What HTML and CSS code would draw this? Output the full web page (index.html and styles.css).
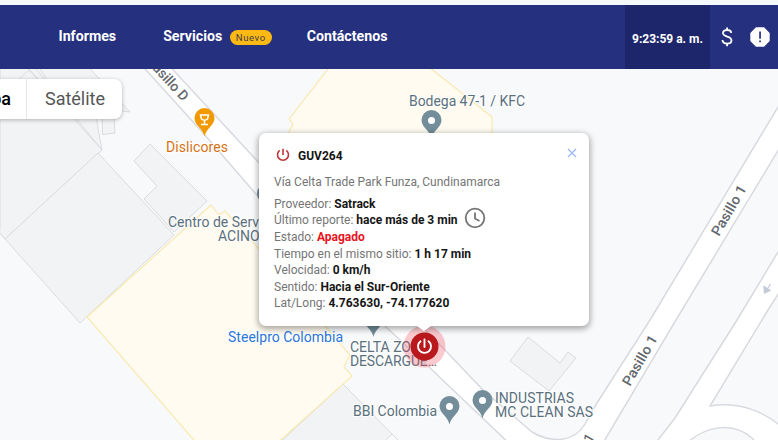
FILE: index.html
```html
<!DOCTYPE html>
<html lang="es">
<head>
<meta charset="utf-8">
<title>Satrack</title>
<link rel="stylesheet" href="styles.css">
</head>
<body>
<header class="navbar">
  <nav class="menu">
    <a class="menu-item">Informes</a>
    <a class="menu-item services">Servicios<span class="badge">Nuevo</span></a>
    <a class="menu-item">Contáctenos</a>
  </nav>
  <div class="clock">9:23:59 a. m.</div>
  <div class="actions">
    <svg class="dollar" viewBox="0 0 12 20"><path d="M10.2 6.1C10.2 4.1 8.600 3 6.100 3S2 4.200 2 6.100c0 4.500 8.500 2.400 8.500 7.200C10.500 15.500 8.700 16.700 6.100 16.700S1.500 15.400 1.500 13.100M6.100.6V3M6.100 16.700v2.500"/></svg>
    <svg class="alert" viewBox="0 0 20 20"><path class="oct" d="M6 .3h8L19.700 6v8L14 19.700H6L.3 14V6z"/><path class="mark" d="M9.200 4.500h1.700v7.200H9.200zM9.200 13.500h1.700v1.800H9.200z"/></svg>
  </div>
</header>
<main class="map">
  <svg class="canvas" viewBox="0 69 778 371">
    <g class="building">
      <path d="M0 60H86L102 150 5 239 0 233z"/>
      <path d="M29 69L102 150 5 239 0 233M19 79L29 70 39 81M36 69L102 150"/>
      <path d="M35 60H82L130 112 60 102z"/>
      <path d="M102 100H113L115 133 102.500 134.500z"/>
      <path d="M98 153L5 239 80 323 174 235z"/>
      <path d="M150 144L134 161 157 186 144 199 174 232 207 201z"/>
      <path d="M343 384L392 434 380 446H276z"/>
      <path d="M392 434L402 444"/>
      <path d="M528 337L510 361 549 391 576 358 568 352 560 363z"/>
    </g>
    <g class="zone">
      <path d="M335 60L289 119 293 124 280 150H492V117L420 60z"/>
      <path d="M211 205L87 317 200 447H273L352 376 344 367 350 355 325 326 259 249 225 211 219 215z"/>
    </g>
    <g class="road">
      <path d="M137 60L204 134 255 193 320 261 385 326 430 368 514 448H600L676 320 785 139V96L778 107 650 320 597 403 585 424Q577 438 560 439.500 545 440 532 432L483 390 443 348 350 255 260 164 164 60z"/>
      <path d="M784 242L737 320 675 418 658 440 650 450H680C704 423 734 422 752 438L762 450H790V435C765 408 735 402 710 406L768 310 784 285z"/>
    </g>
    <path class="arrow" d="M770.500 284L766 291M764 286.500L764.500 293 770 290.500z"/>
    <g class="street">
      <text transform="translate(146 62) rotate(47.500)" textLength="54" lengthAdjust="spacingAndGlyphs">Pasillo D</text>
      <text transform="translate(719 237) rotate(-60)" textLength="56" lengthAdjust="spacingAndGlyphs">Pasillo 1</text>
      <text transform="translate(630 387) rotate(-60)" textLength="56" lengthAdjust="spacingAndGlyphs">Pasillo 1</text>
      <text transform="translate(591 444) rotate(-60)">1</text>
    </g>
    <defs>
      <g id="pin">
        <path d="M0 0C-1.500-8-10-11-10-18.500A10 10 0 0 1 10-18.500C10-11 1.500-8 0 0z"/>
      </g>
    </defs>
    <g class="pin">
      <use href="#pin" x="431.500" y="138.500"/><circle cx="431.500" cy="120.500" r="3.500"/>
      <use href="#pin" x="449.500" y="424.500"/><circle cx="449.500" cy="406.500" r="3.500"/>
      <use href="#pin" x="482.500" y="418.500"/><circle cx="482.500" cy="400.500" r="3.500"/>
      <use href="#pin" x="373.500" y="337"/>
      <use href="#pin" x="267" y="212"/>
    </g>
    <use class="pin-bar" href="#pin" x="204.500" y="136.500"/>
    <path class="glass" d="M200.500 115H208.500L207.500 119Q204.500 121.500 201.500 119zM204.500 120V124.500M201 124.500H208"/>
    <g class="place">
      <text x="409" y="106" textLength="116">Bodega 47-1 / KFC</text>
      <text class="bar" x="166" y="152" textLength="62">Dislicores</text>
      <text x="168" y="227">Centro de Servicio</text>
      <text x="218" y="241">ACINOX</text>
      <text class="shop" x="228" y="342" textLength="115">Steelpro Colombia</text>
      <text x="350" y="352">CELTA ZONA</text>
      <text x="350" y="366" textLength="87">DESCARGUE…</text>
      <text x="353" y="416" textLength="84">BBI Colombia</text>
      <text x="495" y="403" textLength="79">INDUSTRIAS</text>
      <text x="495" y="417" textLength="98">MC CLEAN SAS</text>
    </g>
    <circle class="halo" cx="424.500" cy="346.500" r="21"/>
    <circle class="vehicle" cx="424.500" cy="346.500" r="14"/>
    <path class="vehicle-power" d="M420.500 341.300A6.500 6.500 0 1 0 428.500 341.300M424.500 339.500V347"/>
  </svg>
  <div class="map-type">
    <span class="type-map">Mapa</span>
    <span class="type-sat">Satélite</span>
  </div>
  <section class="popup">
    <div class="popup-head">
      <svg class="power" viewBox="0 0 14 14"><path d="M3.700 2.300A5.500 5.500 0 1 0 10.300 2.300M7 .8V7"/></svg>
      <strong>GUV264</strong>
      <svg class="close" viewBox="0 0 10 10"><path d="M1 1L9 9M9 1L1 9"/></svg>
    </div>
    <p class="address">Vía Celta Trade Park Funza, Cundinamarca</p>
    <ul class="details">
      <li>Proveedor: <b>Satrack</b></li>
      <li class="report">Último reporte: <b>hace más de 3 min</b><svg class="history" viewBox="0 0 22 22"><circle cx="11" cy="11" r="9.300"/><path d="M11 5.500V11.500L15.500 14"/></svg></li>
      <li>Estado: <b class="off">Apagado</b></li>
      <li>Tiempo en el mismo sitio: <b>1 h 17 min</b></li>
      <li>Velocidad: <b>0 km/h</b></li>
      <li>Sentido: <b>Hacia el Sur-Oriente</b></li>
      <li>Lat/Long: <b>4.763630, -74.177620</b></li>
    </ul>
  </section>
</main>
</body>
</html>
```
FILE: styles.css
```css
* { box-sizing: border-box; }
body {
  margin: 0;
  height: 440px;
  overflow: hidden;
  display: flex;
  flex-direction: column;
  font-family: Roboto, "Liberation Sans", sans-serif;
  background: #fff;
}
.navbar {
  flex: none;
  height: 69px;
  border-top: 5px solid #f5f8ff;
  background: #25307f;
  display: flex;
  color: #fff;
}
.menu {
  flex: 1;
  display: flex;
  align-items: center;
  padding: 0 0 2px 58.500px;
  font-size: 14.200px;
  font-weight: 700;
}
.menu-item { white-space: nowrap; }
.services {
  display: flex;
  align-items: center;
  margin: 0 35px 0 47px;
}
.badge {
  width: 42px;
  height: 15px;
  margin: 2px 0 0 7.500px;
  border-radius: 8px;
  background: #fdb913;
  color: #423d45;
  font-size: 9.500px;
  font-weight: 400;
  line-height: 15px;
  letter-spacing: .6px;
  text-align: center;
}
.clock {
  width: 85px;
  background: #1d266b;
  font-size: 12px;
  font-weight: 700;
  line-height: 68px;
  text-align: center;
  white-space: nowrap;
}
.actions {
  width: 68px;
  display: flex;
  align-items: center;
  padding-left: 11px;
}
.dollar { width: 12px; height: 20px; fill: none; stroke: #fff; stroke-width: 1.800; }
.alert { width: 20px; height: 20px; margin-left: 17px; }
.oct { fill: #fff; }
.mark { fill: #25307f; }

.map { flex: 1; position: relative; overflow: hidden; background: #f8f9fb; }
.canvas { display: block; width: 778px; height: 371px; }
.building { fill: #f1f3f4; stroke: #dadce0; stroke-width: 1; }
.zone { fill: #fffbf0; stroke: #fae9b0; stroke-width: 1.200; }
.road { fill: #fff; stroke: #d8dae0; stroke-width: 1.500; }
.arrow { fill: #c3cad9; stroke: #c3cad9; stroke-width: 1.300; }
.street { font-size: 14px; font-weight: 500; fill: #62676d; }
.pin { fill: #738e9a; }
.pin circle { fill: #fff; }
.pin-bar { fill: #f29900; }
.glass { fill: none; stroke: #fff; stroke-width: 1.500; }
.place { font-size: 14px; fill: #5a707c; stroke: #fff; stroke-width: 2px; stroke-opacity: .8; paint-order: stroke; }
.place .bar { fill: #d57314; }
.place .shop { fill: #2a75dc; }
.halo { fill: #f04050; fill-opacity: .28; }
.vehicle { fill: #b9191c; }
.vehicle-power { fill: none; stroke: #fff; stroke-width: 1.900; stroke-linecap: round; }

.map-type {
  position: absolute;
  top: 10px;
  left: -45px;
  width: 167px;
  height: 40px;
  display: flex;
  border-radius: 8px;
  background: #fff;
  box-shadow: 0 1px 4px rgba(0, 0, 0, .28);
  font-size: 18px;
  line-height: 40px;
}
.type-map { width: 72px; padding-right: 15px; border-right: 1px solid #e6e6e6; font-weight: 500; color: #000; text-align: right; }
.type-sat { flex: 1; padding-left: 1px; text-align: center; color: #565656; }

.popup {
  position: absolute;
  top: 64px;
  left: 259px;
  width: 330px;
  height: 193px;
  padding: 15px 12px 0 15px;
  border-radius: 7px;
  background: #fff;
  box-shadow: 0 2px 6px 1px rgba(0, 0, 0, .35);
  font-size: 12px;
  color: #757575;
}
.popup::after {
  content: "";
  position: absolute;
  left: 158px;
  top: 193px;
  border: 7px solid transparent;
  border-top: 5px solid #fff;
  border-bottom: 0;
}
.popup-head { display: flex; align-items: center; height: 16px; color: #161616; }
.popup-head strong { margin-left: 8px; }
.power { width: 14px; height: 14px; margin: -2px 0 0 2px; fill: none; stroke: #c03537; stroke-width: 1.600; }
.close { width: 10px; height: 10px; margin: -7px 0 0 auto; fill: none; stroke: #9ab8f0; stroke-width: 1.200; }
.address { margin: 10px 0 6px; line-height: 16px; }
.details { margin: 0; padding: 0; list-style: none; line-height: 16.500px; white-space: nowrap; }
.details b { color: #161616; font-weight: 700; }
.details .off { color: #e8141c; }
.report { display: flex; height: 16.500px; margin-top: -.5px; margin-bottom: .5px; white-space: pre; }
.history { width: 22px; height: 22px; margin: -5.500px 0 0 6.500px; fill: none; stroke: #757575; stroke-width: 1.800; }
```
